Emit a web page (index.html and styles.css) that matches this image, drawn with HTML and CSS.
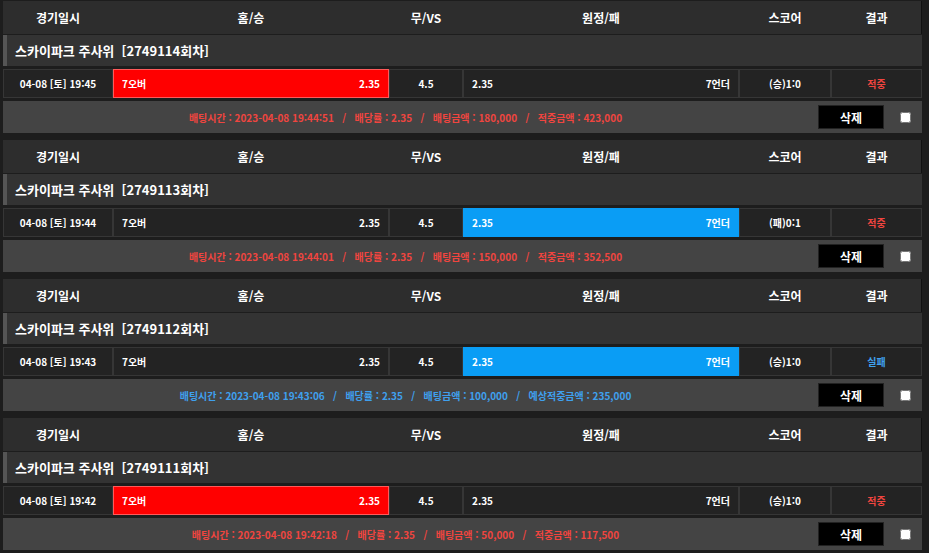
FILE: index.html
```html
<!DOCTYPE html>
<html lang="ko">
<head>
    <meta charset="UTF-8">
    <meta name="viewport" content="width=device-width, initial-scale=1.0">
    <title>배팅내역</title>
    <link rel="stylesheet" href="styles.css">
</head>
<body>
    <div class="container">

        <div class="bet">
            <div class="head">
                <div>경기일시</div><div>홈/승</div><div>무/VS</div><div>원정/패</div><div>스코어</div><div>결과</div>
            </div>
            <div class="title">스카이파크 주사위&nbsp;&nbsp;[2749114회차]</div>
            <div class="row">
                <div class="cell">04-08 [토] 19:45</div>
                <div class="cell pick red"><span>7오버</span><span>2.35</span></div>
                <div class="cell">4.5</div>
                <div class="cell pick"><span>2.35</span><span>7언더</span></div>
                <div class="cell">(승)1:0</div>
                <div class="cell win">적중</div>
            </div>
            <div class="info">
                <div class="detail win">배팅시간 : 2023-04-08 19:44:51 &nbsp;&nbsp;/&nbsp;&nbsp; 배당률 : 2.35 &nbsp;&nbsp;/&nbsp;&nbsp; 배팅금액 : 180,000 &nbsp;&nbsp;/&nbsp;&nbsp; 적중금액 : 423,000</div>
                <button class="del">삭제</button>
                <input type="checkbox" class="check">
            </div>
        </div>

        <div class="bet">
            <div class="head">
                <div>경기일시</div><div>홈/승</div><div>무/VS</div><div>원정/패</div><div>스코어</div><div>결과</div>
            </div>
            <div class="title">스카이파크 주사위&nbsp;&nbsp;[2749113회차]</div>
            <div class="row">
                <div class="cell">04-08 [토] 19:44</div>
                <div class="cell pick"><span>7오버</span><span>2.35</span></div>
                <div class="cell">4.5</div>
                <div class="cell pick blue"><span>2.35</span><span>7언더</span></div>
                <div class="cell">(패)0:1</div>
                <div class="cell win">적중</div>
            </div>
            <div class="info">
                <div class="detail win">배팅시간 : 2023-04-08 19:44:01 &nbsp;&nbsp;/&nbsp;&nbsp; 배당률 : 2.35 &nbsp;&nbsp;/&nbsp;&nbsp; 배팅금액 : 150,000 &nbsp;&nbsp;/&nbsp;&nbsp; 적중금액 : 352,500</div>
                <button class="del">삭제</button>
                <input type="checkbox" class="check">
            </div>
        </div>

        <div class="bet">
            <div class="head">
                <div>경기일시</div><div>홈/승</div><div>무/VS</div><div>원정/패</div><div>스코어</div><div>결과</div>
            </div>
            <div class="title">스카이파크 주사위&nbsp;&nbsp;[2749112회차]</div>
            <div class="row">
                <div class="cell">04-08 [토] 19:43</div>
                <div class="cell pick"><span>7오버</span><span>2.35</span></div>
                <div class="cell">4.5</div>
                <div class="cell pick blue"><span>2.35</span><span>7언더</span></div>
                <div class="cell">(승)1:0</div>
                <div class="cell lose">실패</div>
            </div>
            <div class="info">
                <div class="detail lose">배팅시간 : 2023-04-08 19:43:06 &nbsp;&nbsp;/&nbsp;&nbsp; 배당률 : 2.35 &nbsp;&nbsp;/&nbsp;&nbsp; 배팅금액 : 100,000 &nbsp;&nbsp;/&nbsp;&nbsp; 예상적중금액 : 235,000</div>
                <button class="del">삭제</button>
                <input type="checkbox" class="check">
            </div>
        </div>

        <div class="bet">
            <div class="head">
                <div>경기일시</div><div>홈/승</div><div>무/VS</div><div>원정/패</div><div>스코어</div><div>결과</div>
            </div>
            <div class="title">스카이파크 주사위&nbsp;&nbsp;[2749111회차]</div>
            <div class="row">
                <div class="cell">04-08 [토] 19:42</div>
                <div class="cell pick red"><span>7오버</span><span>2.35</span></div>
                <div class="cell">4.5</div>
                <div class="cell pick"><span>2.35</span><span>7언더</span></div>
                <div class="cell">(승)1:0</div>
                <div class="cell win">적중</div>
            </div>
            <div class="info">
                <div class="detail win">배팅시간 : 2023-04-08 19:42:18 &nbsp;&nbsp;/&nbsp;&nbsp; 배당률 : 2.35 &nbsp;&nbsp;/&nbsp;&nbsp; 배팅금액 : 50,000 &nbsp;&nbsp;/&nbsp;&nbsp; 적중금액 : 117,500</div>
                <button class="del">삭제</button>
                <input type="checkbox" class="check">
            </div>
        </div>

    </div>
</body>
</html>
```

FILE: styles.css
```css
body {
    margin: 0;
    padding: 0;
    background-color: #1d1d1d;
    color: #fff;
    font-family: "Noto Sans CJK KR", "Noto Sans", sans-serif;
    font-weight: bold;
    font-size: 10px;
}

.container {
    width: 919px;
    margin-left: 3px;
    padding-top: 1px;
}

.bet {
    margin-bottom: 7px;
}

.head,
.row {
    display: grid;
    grid-template-columns: 110px 276px 74px 276px 92px 91px;
}

.head {
    height: 33px;
    background-color: #2d2d2d;
    border-right: 1px solid #111;
    box-sizing: border-box;
    font-size: 12px;
    line-height: 33px;
    text-align: center;
}

.title {
    margin-top: 1px;
    height: 31px;
    line-height: 31px;
    background-color: #333;
    border-left: 4px solid #555;
    padding-left: 8px;
    font-size: 13px;
}

.row {
    margin-top: 3px;
    height: 29px;
}

.cell {
    background-color: #232323;
    border: 1px solid #363636;
    display: flex;
    align-items: center;
    justify-content: center;
}

.pick {
    justify-content: space-between;
    padding: 0 8px;
}

.red {
    background-color: #ff0000;
    border-color: #ff5a5a;
}

.blue {
    background-color: #0a9df5;
    border-color: #0a9df5;
}

.win {
    color: #f0453f;
}

.lose {
    color: #3fa0ee;
}

.info {
    margin-top: 3px;
    height: 32px;
    background-color: #444;
    display: flex;
    align-items: center;
}

.detail {
    flex: 1;
    text-align: center;
}

.del {
    width: 66px;
    height: 24px;
    margin-left: 10px;
    background-color: #000;
    border: 1px solid #222;
    color: #fff;
    font-family: inherit;
    font-weight: bold;
    font-size: 12px;
    cursor: pointer;
}

.check {
    width: 11px;
    height: 11px;
    margin: 0 11px 0 16px;
}
```
